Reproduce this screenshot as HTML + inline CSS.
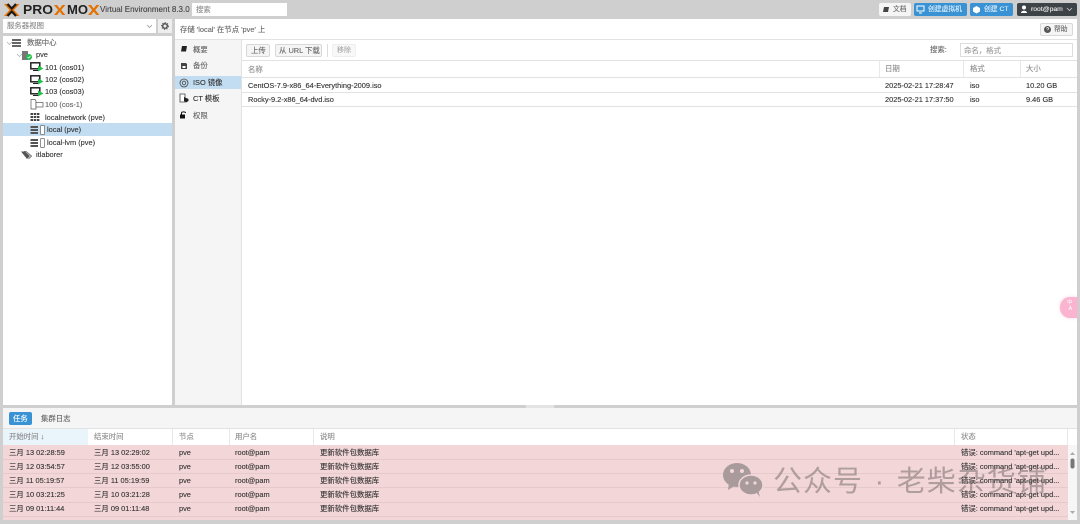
<!DOCTYPE html>
<html><head><meta charset="utf-8"><style>
html,body{margin:0;padding:0}
body{width:1080px;height:524px;overflow:hidden;position:relative;background:#cfcfcf;font-family:"Liberation Sans","Noto Sans CJK SC",sans-serif;font-size:7.4px;color:#333}
#w{position:absolute;left:0;top:0;width:1080px;height:524px;filter:blur(.35px)}
.b,.t,svg{position:absolute}
.t{white-space:nowrap;line-height:10px;-webkit-text-stroke:.12px currentColor}
.g{color:#8c8c8c}
.s{color:#666}
.h{font-size:6.8px}
.btn{position:absolute;border:1px solid #d8d8d8;background:#f5f5f5;border-radius:2px;box-sizing:border-box}
.blue{position:absolute;background:#3892d4;border-radius:2px}
.w{color:#fff}
</style></head><body><div id="w">
<!-- header -->
<svg style="left:4px;top:2px" width="96" height="15" viewBox="0 0 96 15">
<path d="M0 2H4.500L15.500 14H11Z" fill="#e57000"/><path d="M15.500 2H11L0 14H4.500Z" fill="#e57000"/><path d="M3.500 2L7.750 6.500L12 2" fill="none" stroke="#1a1a1a" stroke-width="2.200"/><path d="M3.500 14L7.750 9.500L12 14" fill="none" stroke="#1a1a1a" stroke-width="2.200"/>
<text x="19" y="12" font-family="Liberation Sans" font-weight="bold" font-size="12.500" fill="#222" textLength="30" lengthAdjust="spacingAndGlyphs">PRO</text>
<path d="M50 3H53L55.700 6.500L58.400 3H61.400L57.200 8L61.400 13H58.400L55.700 9.500L53 13H50L54.200 8Z" fill="#e57000"/>
<text x="63" y="12" font-family="Liberation Sans" font-weight="bold" font-size="12.500" fill="#222" textLength="21" lengthAdjust="spacingAndGlyphs">MO</text>
<path d="M84 3H87L89.700 6.500L92.400 3H95.400L91.200 8L95.400 13H92.400L89.700 9.500L87 13H84L88.200 8Z" fill="#e57000"/>
</svg>
<span class="t" style="left:100px;top:5px;color:#444;font-size:8px">Virtual Environment 8.3.0</span>
<div class="b" style="left:192px;top:3px;width:95px;height:13px;background:#fff"></div>
<span class="t g" style="left:196px;top:5px">搜索</span>
<div class="b" style="left:879px;top:3px;width:32px;height:13px;background:#f5f5f5;border-radius:2px"></div>
<svg style="left:882px;top:6px" width="8" height="8"><path d="M2 1H7L6 6H1Z" fill="#444"/></svg>
<span class="t s h" style="left:893px;top:5px">文档</span>
<div class="blue" style="left:914px;top:3px;width:53px;height:13px"></div>
<svg style="left:916px;top:5px" width="9" height="9"><rect x="1" y="1" width="7" height="5" fill="none" stroke="#fff" stroke-width="1"/><path d="M3 8H6" stroke="#fff"/></svg>
<span class="t h" style="left:928px;top:5px;color:#e4f1fa">创建虚拟机</span>
<div class="blue" style="left:970px;top:3px;width:43px;height:13px"></div>
<svg style="left:972px;top:5px" width="9" height="9"><path d="M4.500 1L8 3V6.500L4.500 8.500L1 6.500V3Z" fill="#fff"/></svg>
<span class="t h" style="left:984px;top:5px;color:#e4f1fa">创建 CT</span>
<div class="b" style="left:1017px;top:3px;width:60px;height:13px;background:#3e4347;border-radius:2px"></div>
<svg style="left:1020px;top:5px" width="8" height="9"><circle cx="4" cy="2.500" r="2" fill="#fff"/><path d="M1 8C1 5 7 5 7 8Z" fill="#fff"/></svg>
<span class="t h" style="left:1031px;top:5px;color:#eee">root@pam</span>
<svg style="left:1066px;top:7px" width="7" height="5"><path d="M1 1L3.500 3.500L6 1" fill="none" stroke="#ccc" stroke-width=".8"/></svg>

<!-- selector -->
<div class="b" style="left:3px;top:19px;width:153px;height:14px;background:#fff"></div>
<span class="t g" style="left:7px;top:21px">服务器视图</span>
<svg style="left:146px;top:24px" width="7" height="5"><path d="M1 1L3.500 3.500L6 1" fill="none" stroke="#999" stroke-width=".8"/></svg>
<div class="b" style="left:158px;top:19px;width:14px;height:14px;background:#eee"></div>
<svg style="left:161px;top:22px" width="8" height="8"><circle cx="4" cy="4" r="2.300" fill="none" stroke="#555" stroke-width="1.500"/><circle cx="4" cy="4" r="3.400" fill="none" stroke="#555" stroke-width="1" stroke-dasharray="1.200 1.400"/></svg>

<!-- tree -->
<div class="b" style="left:3px;top:36px;width:169px;height:369px;background:#fff"></div>
<div class="b" style="left:3px;top:123px;width:169px;height:13px;background:#c2ddf2"></div>
<svg style="left:6px;top:41px" width="7" height="5"><path d="M1 1L3.500 3.500L6 1" fill="none" stroke="#aaa" stroke-width=".7"/></svg>
<svg style="left:12px;top:38px" width="10" height="10"><path d="M0 1h9v2H0zM0 4h9v2H0zM0 7h9v2H0z" fill="#666"/></svg>
<span class="t s" style="left:27px;top:38px">数据中心</span>
<svg style="left:16px;top:53px" width="7" height="5"><path d="M1 1L3.500 3.500L6 1" fill="none" stroke="#aaa" stroke-width=".7"/></svg>
<svg style="left:21px;top:51px" width="12" height="10"><rect x="1" y="0" width="6" height="9" fill="#777"/><circle cx="8" cy="6" r="3" fill="#21bf4b"/><path d="M6.500 6L7.700 7L9.500 5" stroke="#fff" stroke-width=".7" fill="none"/></svg>
<span class="t" style="left:36px;top:50px">pve</span>

<svg style="left:30px;top:62px" width="14" height="11"><rect x=".8" y=".8" width="9" height="6" fill="#fff" stroke="#222" stroke-width="1.500"/><path d="M3 8.500H8" stroke="#222"/><path d="M8 3.500L13.500 6.500L8 9.500Z" fill="#21bf4b"/></svg>
<span class="t" style="left:45px;top:62.500px">101 (cos01)</span>
<svg style="left:30px;top:75px" width="14" height="11"><rect x=".8" y=".8" width="9" height="6" fill="#fff" stroke="#222" stroke-width="1.500"/><path d="M3 8.500H8" stroke="#222"/><path d="M8 3.500L13.500 6.500L8 9.500Z" fill="#21bf4b"/></svg>
<span class="t" style="left:45px;top:75px">102 (cos02)</span>
<svg style="left:30px;top:87px" width="14" height="11"><rect x=".8" y=".8" width="9" height="6" fill="#fff" stroke="#222" stroke-width="1.500"/><path d="M3 8.500H8" stroke="#222"/><path d="M8 3.500L13.500 6.500L8 9.500Z" fill="#21bf4b"/></svg>
<span class="t" style="left:45px;top:87px">103 (cos03)</span>
<svg style="left:30px;top:99px" width="14" height="11"><path d="M1 .5H5L6 2V10H1Z" fill="#fff" stroke="#555" stroke-width=".7"/><rect x="6" y="3.500" width="7" height="4.500" fill="#fff" stroke="#555" stroke-width=".7"/></svg>
<span class="t s" style="left:45px;top:100px">100 (cos-1)</span>
<svg style="left:30px;top:112px" width="10" height="10"><path d="M.5 1h2.500v2H.5zM3.700 1h2.500v2H3.700zM6.900 1h2.500v2H6.900zM.5 4h2.500v2H.5zM3.700 4h2.500v2H3.700zM6.900 4h2.500v2H6.900zM.5 7h2.500v2H.5zM3.700 7h2.500v2H3.700zM6.900 7h2.500v2H6.900z" fill="#444"/></svg>
<span class="t" style="left:45px;top:112.500px">localnetwork (pve)</span>
<svg style="left:30px;top:125px" width="16" height="10"><path d="M.5 1h7.500v2H.5zM.5 4h7.500v2H.5zM.5 7h7.500v2H.5z" fill="#555"/><rect x="10.500" y=".5" width="4" height="9" rx=".8" fill="#fff" stroke="#666" stroke-width=".7"/></svg>
<span class="t" style="left:47px;top:125px">local (pve)</span>
<svg style="left:30px;top:138px" width="16" height="10"><path d="M.5 1h7.500v2H.5zM.5 4h7.500v2H.5zM.5 7h7.500v2H.5z" fill="#555"/><rect x="10.500" y=".5" width="4" height="9" rx=".8" fill="#fff" stroke="#666" stroke-width=".7"/></svg>
<span class="t" style="left:47px;top:137.500px">local-lvm (pve)</span>
<svg style="left:21px;top:150px" width="12" height="10"><path d="M0 1.500H4L9 6L6 9Z" fill="#555"/><path d="M3 1.500H5L10.500 6L7.500 9" fill="none" stroke="#555" stroke-width=".8"/></svg>
<span class="t" style="left:36px;top:150px">itlaborer</span>

<!-- main -->
<div class="b" style="left:175px;top:19px;width:902px;height:386px;background:#fff"></div>
<span class="t s" style="left:180px;top:25px">存储 'local' 在节点 'pve' 上</span>
<div class="b" style="left:175px;top:39px;width:902px;height:1px;background:#e2e2e2"></div>
<div class="btn" style="left:1040px;top:23px;width:33px;height:13px"></div>
<svg style="left:1043px;top:25px" width="9" height="9"><circle cx="4.500" cy="4.500" r="3.500" fill="#555"/><path d="M3.500 3.500C3.500 2.300 5.700 2.300 5.700 3.600C5.700 4.400 4.500 4.400 4.500 5.300" stroke="#fff" stroke-width=".7" fill="none"/></svg>
<span class="t s h" style="left:1054px;top:25px">帮助</span>

<div class="b" style="left:175px;top:40px;width:66px;height:365px;background:#f5f5f5"></div>
<div class="b" style="left:241px;top:40px;width:1px;height:365px;background:#e2e2e2"></div>
<div class="b" style="left:175px;top:76px;width:66px;height:13px;background:#c2ddf2"></div>
<svg style="left:180px;top:45px" width="8" height="8"><path d="M2 1H7L6 6.500H1Z" fill="#222"/></svg>
<span class="t s" style="left:193px;top:44.500px">概要</span>
<svg style="left:180px;top:62px" width="8" height="8"><path d="M1 1H6L7 2V7H1Z" fill="#444"/><rect x="2.500" y="4" width="3" height="2" fill="#fff"/></svg>
<span class="t s" style="left:193px;top:61px">备份</span>
<svg style="left:179px;top:77.500px" width="10" height="10"><circle cx="5" cy="5" r="4" fill="none" stroke="#444" stroke-width=".8"/><circle cx="5" cy="5" r="1.800" fill="none" stroke="#444" stroke-width=".8"/></svg>
<span class="t" style="left:193px;top:77.500px">ISO 镜像</span>
<svg style="left:179px;top:93px" width="11" height="11"><path d="M1 1H6V9H1Z" fill="#fff" stroke="#444" stroke-width=".8"/><path d="M5 4L9.500 6V8L7 9.500L5 8Z" fill="#222"/></svg>
<span class="t" style="left:193px;top:94px">CT 模板</span>
<svg style="left:180px;top:111px" width="9" height="8"><rect x="0" y="3.500" width="5" height="4" fill="#111"/><path d="M1.500 3.500V2C1.500 .5 5.500 .5 5.500 2" fill="none" stroke="#111"/></svg>
<span class="t s" style="left:193px;top:110.500px">权限</span>

<div class="btn" style="left:246px;top:44px;width:24px;height:13px"></div>
<span class="t s" style="left:251px;top:45.500px">上传</span>
<div class="btn" style="left:275px;top:44px;width:47px;height:13px"></div>
<span class="t s" style="left:279px;top:45.500px">从 URL 下载</span>
<div class="b" style="left:327px;top:44px;width:1px;height:13px;background:#ddd"></div>
<div class="btn" style="left:332px;top:44px;width:24px;height:13px;background:#f8f8f8;border-color:#eee"></div>
<span class="t" style="left:337px;top:45.500px;font-size:7px;color:#aaa">移除</span>
<span class="t s" style="left:930px;top:45px">搜索:</span>
<div class="b" style="left:960px;top:43px;width:113px;height:14px;background:#fff;border:1px solid #ddd;box-sizing:border-box"></div>
<span class="t" style="left:964px;top:45.500px;color:#999">命名，格式</span>

<div class="b" style="left:242px;top:60px;width:835px;height:1px;background:#e2e2e2"></div>
<div class="b" style="left:242px;top:77px;width:835px;height:1px;background:#e2e2e2"></div>
<div class="b" style="left:879px;top:61px;width:1px;height:16px;background:#e8e8e8"></div>
<div class="b" style="left:963px;top:61px;width:1px;height:16px;background:#e8e8e8"></div>
<div class="b" style="left:1020px;top:61px;width:1px;height:16px;background:#e8e8e8"></div>
<span class="t g" style="left:248px;top:64.500px">名称</span>
<span class="t g" style="left:885px;top:64px">日期</span>
<span class="t g" style="left:970px;top:64px">格式</span>
<span class="t g" style="left:1026px;top:64px">大小</span>

<div class="b" style="left:242px;top:92px;width:835px;height:1px;background:#e2e2e2"></div>
<div class="b" style="left:242px;top:106px;width:835px;height:1px;background:#e2e2e2"></div>
<span class="t" style="left:248px;top:80.500px">CentOS-7.9-x86_64-Everything-2009.iso</span>
<span class="t" style="left:885px;top:80.500px">2025-02-21 17:28:47</span>
<span class="t" style="left:970px;top:80.500px">iso</span>
<span class="t" style="left:1026px;top:80.500px">10.20 GB</span>
<span class="t" style="left:248px;top:94.500px">Rocky-9.2-x86_64-dvd.iso</span>
<span class="t" style="left:885px;top:94.500px">2025-02-21 17:37:50</span>
<span class="t" style="left:970px;top:94.500px">iso</span>
<span class="t" style="left:1026px;top:94.500px">9.46 GB</span>

<!-- splitter -->
<div class="b" style="left:526px;top:405px;width:28px;height:3px;background:#e4e4e4"></div>

<!-- bottom -->
<div class="b" style="left:3px;top:408px;width:1074px;height:112px;background:#fff"></div>
<div class="b" style="left:3px;top:408px;width:1074px;height:20px;background:#f5f5f5"></div>
<div class="b" style="left:3px;top:428px;width:1074px;height:1px;background:#e2e2e2"></div>
<div class="blue" style="left:9px;top:412px;width:23px;height:13px"></div>
<span class="t w" style="left:13px;top:413.500px">任务</span>
<span class="t s" style="left:41px;top:413.500px">集群日志</span>

<div class="b" style="left:3px;top:429px;width:85px;height:16px;background:#eaf4fb"></div>
<div class="b" style="left:172px;top:429px;width:1px;height:16px;background:#e8e8e8"></div>
<div class="b" style="left:229px;top:429px;width:1px;height:16px;background:#e8e8e8"></div>
<div class="b" style="left:313px;top:429px;width:1px;height:16px;background:#e8e8e8"></div>
<div class="b" style="left:954px;top:429px;width:1px;height:16px;background:#e8e8e8"></div>
<div class="b" style="left:1067px;top:429px;width:1px;height:16px;background:#e8e8e8"></div>
<span class="t g" style="left:9px;top:432px">开始时间 ↓</span>
<span class="t g" style="left:94px;top:432px">结束时间</span>
<span class="t g" style="left:179px;top:432px">节点</span>
<span class="t g" style="left:235px;top:432px">用户名</span>
<span class="t g" style="left:320px;top:432px">说明</span>
<span class="t g" style="left:961px;top:432px">状态</span>

<div class="b" style="left:3px;top:445px;width:1065px;height:75px;background:#f3d6d8"></div>
<div class="b" style="left:3px;top:459px;width:1065px;height:1px;background:#e6c9cc"></div>
<div class="b" style="left:3px;top:473px;width:1065px;height:1px;background:#e6c9cc"></div>
<div class="b" style="left:3px;top:487px;width:1065px;height:1px;background:#e6c9cc"></div>
<div class="b" style="left:3px;top:502px;width:1065px;height:1px;background:#e6c9cc"></div>
<div class="b" style="left:3px;top:516px;width:1065px;height:1px;background:#e6c9cc"></div>

<span class="t" style="left:9px;top:448px">三月 13 02:28:59</span><span class="t" style="left:94px;top:448px">三月 13 02:29:02</span><span class="t" style="left:179px;top:448px">pve</span><span class="t" style="left:235px;top:448px">root@pam</span><span class="t" style="left:320px;top:448px">更新软件包数据库</span><span class="t" style="left:961px;top:448px">错误: command 'apt-get upd...</span>
<span class="t" style="left:9px;top:462px">三月 12 03:54:57</span><span class="t" style="left:94px;top:462px">三月 12 03:55:00</span><span class="t" style="left:179px;top:462px">pve</span><span class="t" style="left:235px;top:462px">root@pam</span><span class="t" style="left:320px;top:462px">更新软件包数据库</span><span class="t" style="left:961px;top:462px">错误: command 'apt-get upd...</span>
<span class="t" style="left:9px;top:476px">三月 11 05:19:57</span><span class="t" style="left:94px;top:476px">三月 11 05:19:59</span><span class="t" style="left:179px;top:476px">pve</span><span class="t" style="left:235px;top:476px">root@pam</span><span class="t" style="left:320px;top:476px">更新软件包数据库</span><span class="t" style="left:961px;top:476px">错误: command 'apt-get upd...</span>
<span class="t" style="left:9px;top:490px">三月 10 03:21:25</span><span class="t" style="left:94px;top:490px">三月 10 03:21:28</span><span class="t" style="left:179px;top:490px">pve</span><span class="t" style="left:235px;top:490px">root@pam</span><span class="t" style="left:320px;top:490px;">更新软件包数据库</span><span class="t" style="left:961px;top:490px">错误: command 'apt-get upd...</span>
<span class="t" style="left:9px;top:504px">三月 09 01:11:44</span><span class="t" style="left:94px;top:504px">三月 09 01:11:48</span><span class="t" style="left:179px;top:504px">pve</span><span class="t" style="left:235px;top:504px">root@pam</span><span class="t" style="left:320px;top:504px">更新软件包数据库</span><span class="t" style="left:961px;top:504px">错误: command 'apt-get upd...</span>

<!-- scrollbar -->
<div class="b" style="left:1068px;top:445px;width:9px;height:75px;background:#f6f6f6"></div>
<svg style="left:1069px;top:450px" width="7" height="66"><path d="M1 5L3.500 2L6 5Z" fill="#aaa"/><path d="M1 61L3.500 64L6 61Z" fill="#aaa"/><rect x="1.500" y="8.500" width="4" height="10" rx="2" fill="#777"/></svg>

<!-- watermark -->
<svg style="left:722px;top:462px" width="44" height="36" viewBox="0 0 44 36"><ellipse cx="15" cy="13" rx="14" ry="12" fill="#a99b9c"/><path d="M7 21L6 28L14 23Z" fill="#a99b9c"/><ellipse cx="29" cy="23" rx="12" ry="10" fill="#a99b9c" stroke="#f3d6d8" stroke-width="1.500"/><path d="M34 30L38 35L36 28Z" fill="#a99b9c"/><circle cx="10" cy="9" r="2" fill="#f3d6d8"/><circle cx="20" cy="9" r="2" fill="#f3d6d8"/><circle cx="25" cy="21" r="1.600" fill="#f3d6d8"/><circle cx="33" cy="21" r="1.600" fill="#f3d6d8"/></svg>
<span class="t" style="left:773px;top:465px;font-size:29px;line-height:34px;color:rgba(110,100,100,.5);letter-spacing:1px;word-spacing:2.500px;-webkit-text-stroke:0">公众号 · 老柴杂货铺</span>

<!-- pink float -->
<div class="b" style="left:1060px;top:297px;width:17px;height:21px;background:#fbb4d0;border-radius:10px 0 0 10px;box-shadow:0 0 3px rgba(251,180,208,.6)"></div>
<span class="t w" style="left:1067px;top:300px;font-size:5.500px;line-height:6px;-webkit-text-stroke:0">中<br>&nbsp;A</span>
</div></body></html>
